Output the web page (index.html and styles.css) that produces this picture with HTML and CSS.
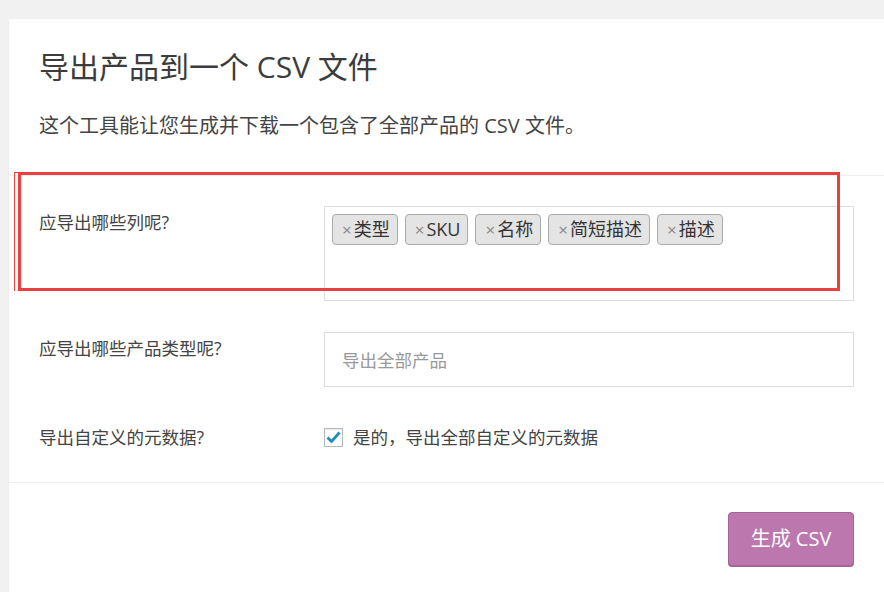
FILE: index.html
```html
<!DOCTYPE html>
<html lang="zh-CN">
	<head>
		<meta charset="UTF-8" />
		<meta name="viewport" content="width=device-width, initial-scale=1.0" />
		<title>导出产品</title>
		<link rel="stylesheet" href="styles.css">
	</head>
	<body>
		<div class="card">
			<div class="card-head">
				<h2 class="title">导出产品到一个 CSV 文件</h2>
				<p class="desc">这个工具能让您生成并下载一个包含了全部产品的 CSV 文件。</p>
			</div>

			<div class="form">
				<div class="row">
					<div class="label">应导出哪些列呢?</div>
					<div class="field">
						<ul class="choices">
							<li class="choice"><span class="remove">×</span>类型</li>
							<li class="choice"><span class="remove">×</span>SKU</li>
							<li class="choice"><span class="remove">×</span>名称</li>
							<li class="choice"><span class="remove">×</span>简短描述</li>
							<li class="choice"><span class="remove">×</span>描述</li>
						</ul>
					</div>
				</div>
				<div class="row row-select">
					<div class="label">应导出哪些产品类型呢?</div>
					<div class="field">
						<div class="select">导出全部产品</div>
					</div>
				</div>
				<div class="row row-check">
					<div class="label">导出自定义的元数据?</div>
					<div class="field check-field">
						<span class="checkbox">
							<svg width="15" height="13" viewBox="0 0 15 13"><path d="M1.5 6.5 L5.5 10.5 L13.5 1.5" fill="none" stroke="#1e8cbe" stroke-width="2.8" stroke-linejoin="round"/></svg>
						</span>
						<span>是的，导出全部自定义的元数据</span>
					</div>
				</div>
			</div>

			<div class="actions">
				<a class="button" href="javascript:;">生成 CSV</a>
			</div>
		</div>

		<!-- 标注框 -->
		<div class="mark"></div>
	</body>
</html>
```

FILE: styles.css
```css
* {
	margin: 0;
	padding: 0;
	box-sizing: border-box;
}
body {
	background-color: #f1f1f1;
	padding: 19px 0 0 9px;
	font-family: "Open Sans", "Noto Sans CJK SC", sans-serif;
	color: #444;
	overflow: hidden;
}
.card {
	width: 875px;
	background-color: #fff;
	box-shadow: 0 1px 2px rgba(0, 0, 0, 0.05);
	padding-bottom: 40px;
}
.card-head {
	padding: 28px 30px 35px;
	border-bottom: 1px solid #eee;
}
.title {
	font-size: 30px;
	line-height: 40px;
	font-weight: normal;
	color: #3c3c3c;
}
.desc {
	margin-top: 25px;
	font-size: 20px;
	line-height: 28px;
	color: #444;
}
.form {
	padding: 30px 30px 33px;
	border-bottom: 1px solid #eee;
}
.row {
	display: flex;
	font-size: 17.5px;
	line-height: 24px;
}
.row-select {
	margin-top: 31px;
}
.row-check {
	margin-top: 38px;
}
.label {
	width: 285px;
	padding-top: 4px;
	color: #444;
}
.row-check .label {
	padding-top: 0;
}
.field {
	width: 530px;
}
.choices {
	list-style: none;
	height: 95px;
	border: 1px solid #ddd;
	padding: 7px 0 0 7px;
	display: flex;
	align-items: flex-start;
	gap: 7px;
}
.choice {
	height: 31px;
	line-height: 29px;
	font-size: 18px;
	color: #333;
	background-color: #e4e4e4;
	border: 1px solid #aaa;
	border-radius: 4px;
	padding: 0 7px 0 9px;
}
.remove {
	font-size: 17px;
	color: #888;
	margin-right: 2px;
}
.select {
	height: 55px;
	border: 1px solid #ddd;
	padding-left: 17px;
	display: flex;
	align-items: center;
	color: #999;
}
.check-field {
	display: flex;
	align-items: center;
	gap: 10px;
}
.checkbox {
	width: 19px;
	height: 19px;
	border: 1px solid #b4b9be;
	box-shadow: inset 0 1px 2px rgba(0, 0, 0, 0.1);
	display: flex;
	align-items: center;
	justify-content: center;
}
.actions {
	display: flex;
	justify-content: flex-end;
	padding: 29px 30px 0;
}
.button {
	display: block;
	width: 126px;
	height: 54px;
	line-height: 52px;
	text-align: center;
	font-size: 20px;
	color: #fff;
	text-decoration: none;
	background-color: #bb77ae;
	border: 1px solid #a36597;
	border-radius: 4px;
	box-shadow: 0 1px 0 #a36597;
}
.mark {
	position: absolute;
	left: 18px;
	top: 172px;
	width: 822px;
	height: 119px;
	border: 3px solid #e8413f;
}
.mark::before {
	content: "";
	position: absolute;
	left: -7px;
	top: -3px;
	width: 5px;
	height: 118px;
	border-left: 1px solid #e8413f;
	border-top: 1px solid #e8413f;
}
```
